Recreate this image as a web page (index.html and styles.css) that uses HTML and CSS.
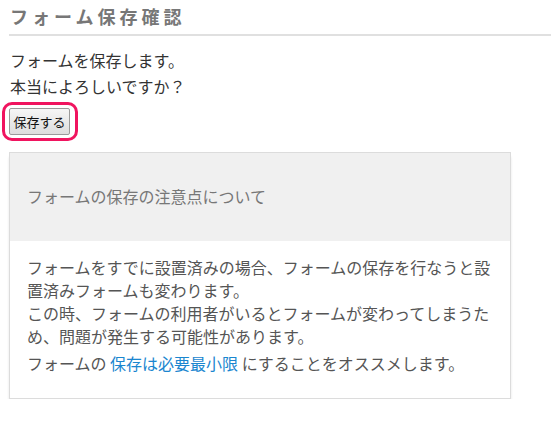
FILE: index.html
```html
<!DOCTYPE html>
<html lang="ja">
<head>
<meta charset="utf-8">
<link rel="stylesheet" href="styles.css">
</head>
<body>
<div class="page">
  <h1 class="title">フォーム保存確認</h1>
  <p class="lead">フォームを保存します。<br>本当によろしいですか？</p>
  <div class="btn-wrap"><button class="btn" type="button">保存する</button></div>
  <div class="panel">
    <div class="panel-head">フォームの保存の注意点について</div>
    <div class="panel-body">
      <p class="txt">フォームをすでに設置済みの場合、フォームの保存を行なうと設置済みフォームも変わります。<br>この時、フォームの利用者がいるとフォームが変わってしまうため、問題が発生する可能性があります。</p>
      <p class="txt">フォームの <a class="link" href="#">保存は必要最小限</a> にすることをオススメします。</p>
    </div>
  </div>
</div>
</body>
</html>
```
FILE: styles.css
```css
html, body {
  margin: 0;
  padding: 0;
  background: #fff;
}
body {
  font-family: "Noto Sans CJK JP", "Noto Sans", sans-serif;
  color: #333;
}
.page {
  padding: 0 0 0 9px;
}
.title {
  margin: 0;
  padding: 5px 0 6px 1px;
  font-size: 18px;
  line-height: 23px;
  font-weight: bold;
  letter-spacing: 4px;
  color: #777;
  border-bottom: 2px solid #e0e0e0;
}
.lead {
  margin: 11px 0 0 1px;
  font-size: 16px;
  line-height: 26px;
}
.btn-wrap {
  margin-top: 3px;
  display: flex;
  width: fit-content;
  margin-left: -7px;
  padding: 3px 5px 3px 4px;
  border: 3px solid #f0145f;
  border-radius: 10px;
}
.btn {
  display: block;
  width: 61px;
  height: 27px;
  padding: 0;
  font-family: "Noto Sans CJK JP", sans-serif;
  font-size: 13px;
  color: #111;
  border: 1px solid #9a9a9a;
  border-radius: 2px;
  background: linear-gradient(#f6f6f6, #dddddd);
}
.panel {
  margin-top: 11px;
  width: 500px;
  border: 1px solid #dcdcdc;
  box-shadow: 0 4px 3px -1px rgba(0, 0, 0, 0.22);
}
.panel-head {
  background: #f0f0f0;
  padding: 31px 17px 33px;
  font-size: 16px;
  line-height: 24px;
  color: #777;
}
.panel-body {
  padding: 15px 17px 23px;
}
.txt {
  margin: 0 0 4px;
  font-size: 16px;
  line-height: 23px;
  color: #555;
}
.txt:last-child {
  margin-bottom: 0;
}
.link {
  color: #1a86cf;
  text-decoration: none;
}
```
